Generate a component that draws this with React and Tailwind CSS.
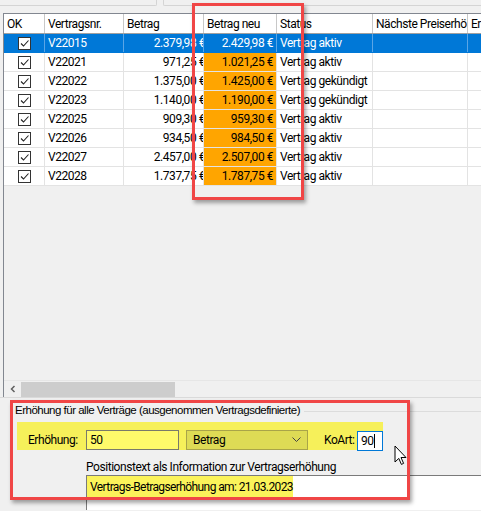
import React from "react";

const rows = [
  { nr: "V22015", betrag: "2.379,98 €", neu: "2.429,98 €", status: "Vertrag aktiv", sel: true },
  { nr: "V22021", betrag: "971,25 €", neu: "1.021,25 €", status: "Vertrag aktiv" },
  { nr: "V22022", betrag: "1.375,00 €", neu: "1.425,00 €", status: "Vertrag gekündigt" },
  { nr: "V22023", betrag: "1.140,00 €", neu: "1.190,00 €", status: "Vertrag gekündigt" },
  { nr: "V22025", betrag: "909,30 €", neu: "959,30 €", status: "Vertrag aktiv" },
  { nr: "V22026", betrag: "934,50 €", neu: "984,50 €", status: "Vertrag aktiv" },
  { nr: "V22027", betrag: "2.457,00 €", neu: "2.507,00 €", status: "Vertrag aktiv" },
  { nr: "V22028", betrag: "1.737,75 €", neu: "1.787,75 €", status: "Vertrag aktiv" },
];

function Check() {
  return (
    <div className="w-[13px] h-[13px] border border-[#333] bg-white flex items-center justify-center">
      <svg width="11" height="11" viewBox="0 0 11 11">
        <path d="M2 5.5 L4.5 8 L9.5 2.5" fill="none" stroke="#222" strokeWidth="1.1" />
      </svg>
    </div>
  );
}

function Row({ r }) {
  const line = r.sel ? "border-[#5aa5e6]" : "border-[#e3e3e3]";
  return (
    <div className={`flex h-[19px] border-b ${r.sel ? "bg-[#0078d7] text-white border-[#0078d7]" : "bg-white border-[#e3e3e3]"}`}>
      <div className={`w-[41px] border-r ${line} flex items-center justify-center`}>
        <Check />
      </div>
      <div className={`w-[79px] border-r ${line} pl-[3px] flex items-center`}>{r.nr}</div>
      <div className={`w-[80px] border-r ${line} overflow-hidden flex items-center justify-end whitespace-nowrap`}>
        <span className="-mr-[2px]">{r.betrag}</span>
      </div>
      <div className={`w-[73px] border-r ${line} flex items-center justify-end pr-[3px] ${r.sel ? "" : "bg-[#ffa500]"}`}>{r.neu}</div>
      <div className={`w-[96px] border-r ${line} pl-[3px] flex items-center whitespace-nowrap`}>{r.status}</div>
      <div className={`w-[95px] border-r ${line}`} />
      <div className="flex-1" />
    </div>
  );
}

export default function App() {
  return (
    <div
      className="relative w-[481px] h-[511px] overflow-hidden bg-[#f0f0f0] text-[12px] leading-none tracking-[-0.45px] text-black"
      style={{ fontFamily: 'Roboto, "Liberation Sans", Arial, sans-serif' }}
    >
      {/* top panels */}
      <div className="flex h-[13px]">
        <div className="w-[157px] h-[6px] border-r border-b border-[#d4d4d4] rounded-br-[2px]" />
        <div className="ml-[6px] flex-1 h-[6px] border-l border-b border-[#d4d4d4] rounded-bl-[2px]" />
      </div>

      {/* grid */}
      <div className="ml-[3px] h-[384px] border-l border-t border-[#828790] flex flex-col">
        <div className="flex h-[20px] bg-white border-b border-[#a0a0a0]">
          <div className="w-[41px] border-r border-[#c8c8c8] pl-[3px] flex items-center">OK</div>
          <div className="w-[79px] border-r border-[#c8c8c8] pl-[3px] flex items-center">Vertragsnr.</div>
          <div className="w-[80px] border-r border-[#c8c8c8] pl-[3px] flex items-center">Betrag</div>
          <div className="w-[73px] border-r border-[#c8c8c8] pl-[3px] flex items-center">Betrag neu</div>
          <div className="w-[96px] border-r border-[#c8c8c8] pl-[3px] flex items-center">Status</div>
          <div className="w-[95px] border-r border-[#c8c8c8] pl-[3px] flex items-center whitespace-nowrap overflow-hidden">Nächste Preiserhöhung</div>
          <div className="flex-1 pl-[3px] flex items-center overflow-hidden whitespace-nowrap">Er</div>
        </div>
        {rows.map((r) => (
          <Row key={r.nr} r={r} />
        ))}
        <div className="flex-1 bg-[#f0f0f0]" />
        {/* horizontal scrollbar */}
        <div className="h-[17px] flex items-center border-t border-[#e6e6e6] bg-[#f0f0f0]">
          <div className="w-[17px] flex items-center justify-center">
            <svg width="8" height="8" viewBox="0 0 8 8">
              <path d="M5.5 1 L2.5 4 L5.5 7" fill="none" stroke="#606060" strokeWidth="1.5" />
            </svg>
          </div>
          <div className="w-[154px] h-[15px] bg-[#cdcdcd]" />
        </div>
      </div>

      {/* bottom panel */}
      <div className="border-t border-[#dadada] h-[113px] flex flex-col">
        <div className="flex items-center h-[24px] pl-[15px] pt-[2px]">
          <span className="whitespace-nowrap text-[11.5px] tracking-[-0.5px]" style={{ fontFamily: '"Liberation Sans", Arial, sans-serif' }}>
            Erhöhung für alle Verträge (ausgenommen Vertragsdefinierte)
          </span>
          <div className="flex-1 ml-[4px] border-t border-[#dcdcdc]" />
        </div>
        <div className="ml-[17px] w-[366px] h-[28px] bg-[#f6f05a] flex items-end pl-[11px]">
          <div className="w-[58px] h-[20px] flex items-center">Erhöhung:</div>
          <div className="w-[93px] h-[20px] border border-[#7a7a6a] bg-[#fffa6a] flex items-center pl-[3px]">50</div>
          <div className="ml-[7px] w-[122px] h-[20px] border border-[#a9a449] bg-[#dedb55] flex items-center pl-[6px] justify-between pr-[6px]">
            <span>Betrag</span>
            <svg width="9" height="6" viewBox="0 0 9 6">
              <path d="M0.5 0.5 L4.5 4.5 L8.5 0.5" fill="none" stroke="#444" strokeWidth="1" />
            </svg>
          </div>
          <div className="ml-[16px] w-[33px] h-[20px] flex items-center">KoArt:</div>
          <div className="w-[26px] h-[20px] translate-y-[1px] border border-[#0078d7] bg-white flex items-center pl-[3px]">
            90<span className="w-px h-[14px] bg-black" />
          </div>
        </div>
        <div className="ml-[86px] h-[25px] flex items-end pb-[2px] whitespace-nowrap">
          Positionstext als Information zur Vertragserhöhung
        </div>
        <div className="ml-[86px] flex-1 bg-white border-t border-l border-[#7a7a7a]">
          <div className="w-[206px] h-[21px] bg-[#fbf35a] flex items-center pl-[3px] whitespace-nowrap tracking-[-0.6px]">
            Vertrags-Betragserhöhung am: 21.03.2023
          </div>
        </div>
      </div>

      {/* annotation boxes */}
      <div className="absolute left-[192px] top-[3px] w-[112px] h-[197px] border-[3px] border-[#f04646] shadow-[2px_3px_4px_rgba(0,0,0,0.35)]" />
      <div className="absolute left-[10px] top-[400px] w-[400px] h-[100px] border-[3px] border-[#f04646] shadow-[2px_3px_4px_rgba(0,0,0,0.35)]" />

      {/* mouse cursor */}
      <svg className="absolute left-[394px] top-[445px]" width="13" height="21" viewBox="0 0 13 21">
        <path d="M1 1 L1 17 L4.8 13.4 L7.4 19.4 L9.6 18.4 L7 12.5 L12 12.5 Z" fill="#fff" stroke="#000" strokeWidth="1" strokeLinejoin="round" />
      </svg>
    </div>
  );
}
